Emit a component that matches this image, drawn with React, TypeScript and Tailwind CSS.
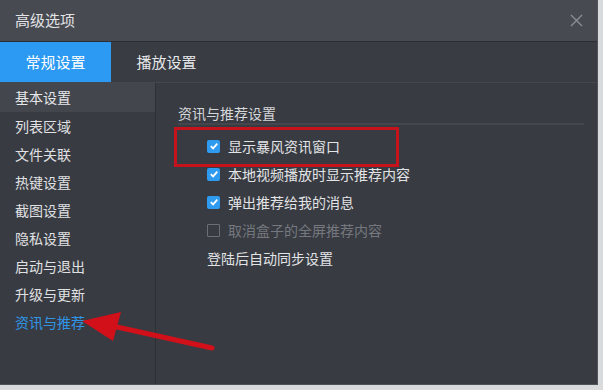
import React from "react";

const font = { fontFamily: '"Noto Sans CJK SC", "Noto Sans", sans-serif' };

const sideItems = [
  "基本设置",
  "列表区域",
  "文件关联",
  "热键设置",
  "截图设置",
  "隐私设置",
  "启动与退出",
  "升级与更新",
  "资讯与推荐",
];

function Check({ checked, disabled }: { checked: boolean; disabled?: boolean }) {
  if (checked) {
    return (
      <span className="flex h-[13px] w-[13px] items-center justify-center rounded-[2px] bg-[#2f9bf0]">
        <svg width="10" height="10" viewBox="0 0 10 10">
          <path d="M1.8 5.2 L4.1 7.4 L8.3 2.6" fill="none" stroke="#fff" strokeWidth="1.8" />
        </svg>
      </span>
    );
  }
  return (
    <span
      className={`h-[13px] w-[13px] rounded-[1px] border ${disabled ? "border-[#6b6e74]" : "border-[#9a9da2]"}`}
    />
  );
}

export default function App() {
  return (
    <div className="h-[390px] w-[603px] bg-[#d9dadc]" style={font}>
      <div className="relative flex h-[385px] w-[598px] flex-col overflow-hidden border-b border-r border-[#50535a] bg-[#383b42]">
        {/* title bar */}
        <div className="flex h-[41px] items-center justify-between bg-[#474a51] pl-[15px] pr-[14px]">
          <span className="text-[15px] text-[#e3e4e6]">高级选项</span>
          <svg width="13" height="13" viewBox="0 0 13 13">
            <path d="M1 1 L12 12 M12 1 L1 12" stroke="#8b8e94" strokeWidth="1.4" />
          </svg>
        </div>
        <div className="h-px bg-[#2c2e33]" />
        {/* tabs */}
        <div className="flex h-[40px] bg-[#393c43]">
          <div className="flex w-[111px] items-center justify-center bg-[#2c9af2] text-[15px] text-white">
            常规设置
          </div>
          <div className="flex w-[111px] items-center justify-center text-[15px] text-[#e6e7e9]">
            播放设置
          </div>
        </div>
        <div className="h-px bg-[#44474e]" />
        {/* body */}
        <div className="flex flex-1">
          <div className="w-[155px] bg-[#383b42]">
            {sideItems.map((t, i) => (
              <div
                key={t}
                className={`flex h-[28px] items-center pl-[15px] text-[14px] ${
                  i === 0 ? "h-[29px] bg-[#43464d] text-[#e6e7e9]" : i === 8 ? "text-[#2f95e6]" : "text-[#e0e1e3]"
                }`}
              >
                {t}
              </div>
            ))}
          </div>
          <div className="w-px bg-[#2e3035]" />
          <div className="relative flex-1 pl-[22px] pr-[13px] pt-[21px]">
            <div className="flex items-end">
              <span className="text-[14px] leading-[18px] text-[#d6d7d9]">资讯与推荐设置</span>
            </div>
            <div className="mt-[1px] h-[2px] bg-[#43464d]" />
            <div className="pl-[29px] pt-[7px]">
              {[
                { t: "显示暴风资讯窗口", c: true },
                { t: "本地视频播放时显示推荐内容", c: true },
                { t: "弹出推荐给我的消息", c: true },
                { t: "取消盒子的全屏推荐内容", c: false, d: true },
              ].map((r) => (
                <div key={r.t} className="flex h-[28px] items-center gap-[8px]">
                  <Check checked={r.c} disabled={r.d} />
                  <span className={`text-[14px] ${r.d ? "text-[#75787e]" : "text-[#e3e4e6]"}`}>{r.t}</span>
                </div>
              ))}
              <div className="flex h-[28px] items-center text-[14px] text-[#e3e4e6]">登陆后自动同步设置</div>
            </div>
            {/* red highlight box */}
            <div className="absolute left-[18px] top-[44px] h-[40px] w-[225px] border-[3px] border-[#c5121b]" />
          </div>
        </div>
        {/* arrow overlay */}
        <svg className="pointer-events-none absolute left-0 top-0" width="598" height="385" viewBox="0 0 598 385">
          <line x1="212" y1="348" x2="108" y2="325" stroke="#d1101a" strokeWidth="5" strokeLinecap="round" />
          <polygon points="82,321 121,312 113,341" fill="#d1101a" />
        </svg>
      </div>
    </div>
  );
}
